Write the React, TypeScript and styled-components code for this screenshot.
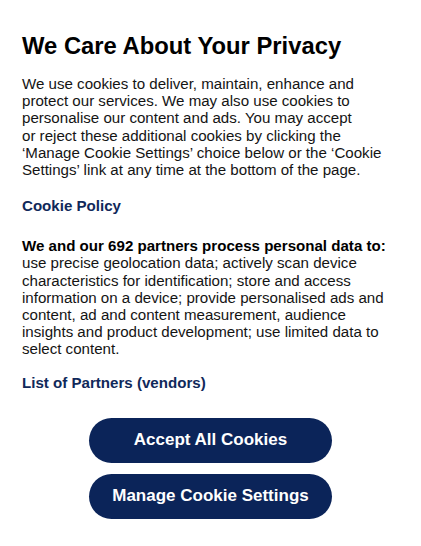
import styled, { createGlobalStyle } from 'styled-components';

const GlobalStyle = createGlobalStyle`
    html, body {
        margin: 0;
        padding: 0;
        background: #ffffff;
    }
    body {
        font-family: "Liberation Sans", Arial, Helvetica, sans-serif;
        color: #000000;
    }
`;

const Banner = styled.div`
    width: 421px;
    min-height: 546px;
    box-sizing: border-box;
    padding: 30px 22px 0 22px;
    background: #ffffff;
`;

const Content = styled.div`
    padding-right: 8px;
`;

const Title = styled.h1`
    margin: 0 0 13px 0;
    font-size: 23.8px;
    line-height: 32px;
    font-weight: bold;
    color: #000000;
    white-space: nowrap;
`;

const Text = styled.p`
    margin: 0;
    font-size: 15.1px;
    line-height: 17.2px;
    color: #141414;
`;

const Strong = styled.strong`
    font-weight: bold;
    color: #000000;
`;

const PolicyLink = styled.a<{ $before?: number }>`
    display: block;
    margin: ${(p) => p.$before ?? 19}px 0 22px 0;
    font-size: 15.1px;
    line-height: 18px;
    font-weight: bold;
    color: #10295a;
    text-decoration: none;
`;

const Buttons = styled.div`
    display: flex;
    flex-direction: column;
    align-items: center;
    gap: 11px;
    margin-top: 26px;
`;

const Button = styled.button`
    width: 243px;
    height: 45px;
    border: none;
    border-radius: 23px;
    background: #0b2459;
    color: #ffffff;
    font-family: "Liberation Sans", Arial, Helvetica, sans-serif;
    font-size: 17px;
    font-weight: bold;
    cursor: pointer;
`;

export default function App() {
    return (
        <Banner>
            <GlobalStyle />
            <Content>
                <Title>We Care About Your Privacy</Title>
                <Text>
                    We use cookies to deliver, maintain, enhance and protect our services. We may also use cookies to
                    personalise our content and ads. You may accept<br />or reject these additional cookies by clicking the
                    ‘Manage Cookie Settings’ choice below or the ‘Cookie Settings’ link at any time at the bottom of the page.
                </Text>
                <PolicyLink href="#">Cookie Policy</PolicyLink>
                <Text>
                    <Strong>We and our 692 partners process personal data to:</Strong> use precise geolocation data;
                    actively scan device characteristics for identification; store and access information on a device;
                    provide personalised ads and content, ad and content measurement, audience insights and product
                    development; use limited data to select content.
                </Text>
                <PolicyLink href="#" $before={16}>List of Partners (vendors)</PolicyLink>
            </Content>
            <Buttons>
                <Button>Accept All Cookies</Button>
                <Button>Manage Cookie Settings</Button>
            </Buttons>
        </Banner>
    );
}
